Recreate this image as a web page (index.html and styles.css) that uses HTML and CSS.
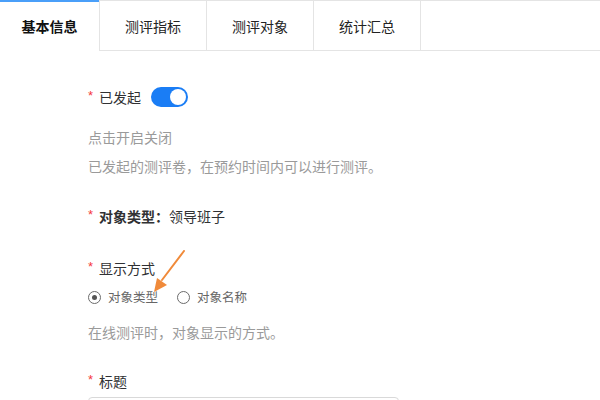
FILE: index.html
```html
<!DOCTYPE html>
<html lang="zh-CN">
<head>
<meta charset="utf-8">
<title>基本信息</title>
<link rel="stylesheet" href="styles.css">
</head>
<body>
<div class="tabs">
  <div class="tab active">基本信息</div>
  <div class="tab">测评指标</div>
  <div class="tab">测评对象</div>
  <div class="tab">统计汇总</div>
  <div class="tab-fill"></div>
</div>
<div class="form">
  <div class="row row-switch">
    <span class="req">*</span><span class="label">已发起</span>
    <span class="switch"><span class="knob"></span></span>
  </div>
  <div class="help help1">点击开启关闭</div>
  <div class="help help2">已发起的测评卷，在预约时间内可以进行测评。</div>
  <div class="row row-type">
    <span class="req">*</span><span class="label bold">对象类型：</span><span class="label">领导班子</span>
  </div>
  <div class="row row-display">
    <span class="req">*</span><span class="label">显示方式</span>
  </div>
  <div class="radios">
    <span class="radio checked"><span class="circle"></span><span class="rtext">对象类型</span></span>
    <span class="radio"><span class="circle"></span><span class="rtext">对象名称</span></span>
  </div>
  <div class="help help3">在线测评时，对象显示的方式。</div>
  <div class="row row-title">
    <span class="req">*</span><span class="label">标题</span>
  </div>
  <div class="input"></div>
  <svg class="arrow" width="40" height="44" viewBox="0 0 40 44">
    <path d="M36 1 L14 30" stroke="#f08a3a" stroke-width="2" stroke-linecap="round" fill="none"/>
    <polygon points="6,42 9,28 19,35" fill="#f08a3a"/>
  </svg>
</div>
</body>
</html>
```
FILE: styles.css
```css
html, body {
  margin: 0;
  padding: 0;
  background: #fff;
}
body {
  font-family: "Microsoft YaHei", "Noto Sans CJK SC", "Noto Sans", sans-serif;
  font-size: 14px;
  color: #333;
  width: 600px;
  height: 400px;
  overflow: hidden;
}
.tabs {
  display: flex;
  height: 51px;
}
.tab {
  box-sizing: border-box;
  width: 107px;
  height: 51px;
  border-top: 1px solid #e4e4e4;
  border-bottom: 1px solid #e4e4e4;
  border-left: 1px solid #e4e4e4;
  display: flex;
  align-items: center;
  justify-content: center;
  color: #222;
  font-size: 14px;
  line-height: 20px;
}
.tab.active {
  width: 99px;
  border-left: none;
  border-top: 2px solid #4a9ff9;
  border-bottom: none;
  font-weight: bold;
  color: #111;
  padding-bottom: 1px;
}
.tab-fill {
  flex: 1;
  box-sizing: border-box;
  height: 51px;
  border-top: 1px solid #e4e4e4;
  border-bottom: 1px solid #e4e4e4;
  border-left: 1px solid #e4e4e4;
}
.form {
  position: relative;
  padding: 36px 0 0 88px;
}
.row {
  display: flex;
  align-items: center;
  height: 20px;
  line-height: 20px;
}
.req {
  display: inline-block;
  width: 11px;
  color: #f5383b;
  font-family: "Liberation Sans", sans-serif;
  font-size: 13px;
  line-height: 20px;
  position: relative;
  top: -1px;
}
.label {
  color: #303133;
}
.bold {
  font-weight: bold;
}
.switch {
  display: inline-flex;
  align-items: center;
  justify-content: flex-end;
  box-sizing: border-box;
  width: 37px;
  height: 20px;
  border-radius: 10px;
  background: #1a7df5;
  margin-left: 10px;
  padding-right: 2px;
}
.knob {
  width: 16px;
  height: 16px;
  border-radius: 50%;
  background: #fff;
}
.help {
  color: #9a9a9a;
  line-height: 20px;
  height: 20px;
}
.help1 {
  margin-top: 20px;
}
.help2 {
  margin-top: 9px;
}
.row-type {
  margin-top: 30px;
}
.row-display {
  margin-top: 32px;
}
.radios {
  display: flex;
  align-items: center;
  height: 20px;
  margin-top: 9px;
  gap: 19px;
}
.radio {
  display: inline-flex;
  align-items: center;
  gap: 7px;
}
.circle {
  box-sizing: border-box;
  width: 13px;
  height: 13px;
  border-radius: 50%;
  border: 1.5px solid #6b6b6b;
  display: inline-flex;
  align-items: center;
  justify-content: center;
}
.radio.checked .circle::after {
  content: "";
  width: 5px;
  height: 5px;
  border-radius: 50%;
  background: #555;
}
.rtext {
  color: #666;
  font-size: 12.5px;
  line-height: 20px;
}
.help3 {
  margin-top: 15px;
}
.row-title {
  margin-top: 29px;
}
.input {
  box-sizing: border-box;
  width: 311px;
  height: 32px;
  margin-top: 6px;
  border: 1px solid #d9d9d9;
  border-radius: 4px;
}
.arrow {
  position: absolute;
  left: 148px;
  top: 199px;
}
```
